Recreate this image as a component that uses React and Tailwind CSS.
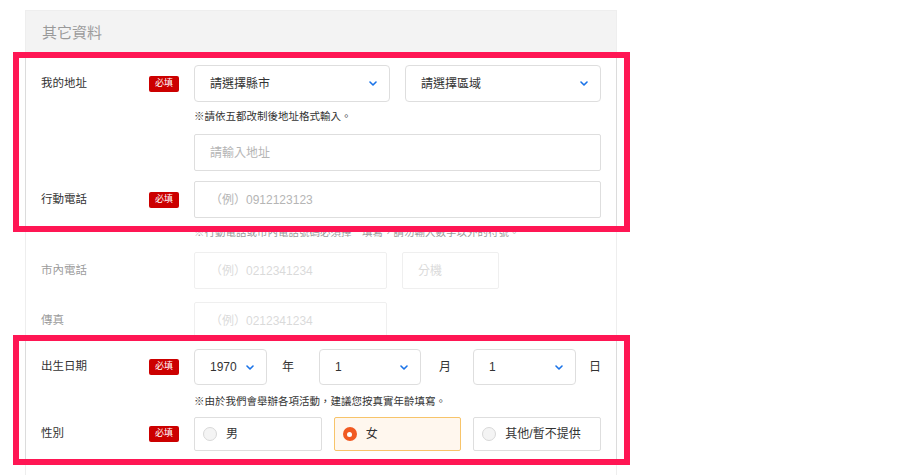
import React from "react";

const FONT = { fontFamily: '"Liberation Sans", "Noto Sans CJK TC", sans-serif' };

function Chevron() {
  return (
    <svg width="8" height="5" viewBox="0 0 8 5" fill="none">
      <path d="M1 1L4 4L7 1" stroke="#1a73e8" strokeWidth="1.6" strokeLinecap="round" strokeLinejoin="round" />
    </svg>
  );
}

function Select({ text, className }) {
  return (
    <div className={"flex items-center justify-between border border-[#dedede] rounded-[4px] bg-white pl-[15px] pr-[12px] text-[12px] text-[#333] " + className}>
      <span>{text}</span>
      <Chevron />
    </div>
  );
}

function Input({ ph, className }) {
  return (
    <div className={"flex items-center border border-[#dedede] rounded-[2px] bg-white pl-[15px] text-[12px] text-[#b5b5b5] " + className}>
      {ph}
    </div>
  );
}

function Badge() {
  return (
    <span className="flex h-[16px] w-[30px] items-center justify-center rounded-[2px] bg-[#cc0000] text-[9px] text-white">
      必填
    </span>
  );
}

function Label({ text, required, h = "h-[37px]" }) {
  return (
    <div className={"flex w-[153px] shrink-0 items-center justify-between pr-[15px] text-[11.5px] text-[#333] " + h}>
      <span>{text}</span>
      {required && <Badge />}
    </div>
  );
}

function Radio({ text, selected }) {
  return (
    <div
      className={
        "flex h-[34px] items-center rounded-[2px] border pl-[8px] text-[12px] text-[#333] " +
        (selected ? "border-[#f7c46a] bg-[#fff7ee]" : "border-[#dedede] bg-white")
      }
    >
      {selected ? (
        <span className="flex h-[14px] w-[14px] items-center justify-center rounded-full bg-[#f15a22]">
          <span className="h-[5px] w-[5px] rounded-full bg-white" />
        </span>
      ) : (
        <span className="h-[14px] w-[14px] rounded-full border border-[#d8d8d8] bg-[#f4f4f4]" />
      )}
      <span className="ml-[9px]">{text}</span>
    </div>
  );
}

export default function App() {
  return (
    <div className="relative h-[475px] w-[910px] overflow-hidden bg-white" style={FONT}>
      <div className="ml-[25px] mt-[10px] w-[592px] border border-[#dcdcdc] bg-white pb-[40px]">
        <div className="flex h-[45px] items-center bg-[#e6e6e6] pl-[16px] text-[15px] text-[#333]">其它資料</div>
        <div className="px-[15px] pt-[9px]">
          {/* address */}
          <div className="flex">
            <Label text="我的地址" required />
            <div className="flex-1">
              <div className="flex gap-[15px]">
                <Select text="請選擇縣市" className="h-[37px] w-[196px]" />
                <Select text="請選擇區域" className="h-[37px] w-[196px]" />
              </div>
              <div className="mt-[6px] text-[10.5px] leading-[16px] text-[#333]">※請依五都改制後地址格式輸入。</div>
              <Input ph="請輸入地址" className="mt-[10px] h-[37px]" />
            </div>
          </div>
          {/* mobile */}
          <div className="mt-[10px] flex">
            <Label text="行動電話" required />
            <div className="flex-1">
              <Input ph="（例）0912123123" className="h-[37px]" />
              <div className="mt-[6px] text-[10.5px] leading-[16px] text-[#333]">
                ※行動電話或市內電話號碼必須擇一填寫，請勿輸入數字以外的符號。
              </div>
            </div>
          </div>
          {/* local phone */}
          <div className="mt-[12px] flex">
            <Label text="市內電話" />
            <div className="flex flex-1">
              <Input ph="（例）0212341234" className="h-[37px] w-[193px]" />
              <Input ph="分機" className="ml-[15px] h-[37px] w-[97px]" />
            </div>
          </div>
          {/* fax */}
          <div className="mt-[13px] flex">
            <Label text="傳真" />
            <div className="flex flex-1">
              <Input ph="（例）0212341234" className="h-[37px] w-[193px]" />
            </div>
          </div>
          {/* birthday */}
          <div className="mt-[10px] flex">
            <Label text="出生日期" required h="h-[36px]" />
            <div className="flex-1">
              <div className="flex items-center text-[12px] text-[#333]">
                <Select text="1970" className="h-[36px] w-[73px]" />
                <span className="w-[52px] pl-[15px]">年</span>
                <Select text="1" className="h-[36px] w-[102px]" />
                <span className="w-[52px] pl-[18px]">月</span>
                <Select text="1" className="h-[36px] w-[103px]" />
                <span className="ml-auto">日</span>
              </div>
              <div className="mt-[8px] text-[10.5px] leading-[16px] text-[#333]">
                ※由於我們會舉辦各項活動，建議您按真實年齡填寫。
              </div>
            </div>
          </div>
          {/* gender */}
          <div className="mt-[8px] flex">
            <Label text="性別" required h="h-[34px]" />
            <div className="grid flex-1 grid-cols-3 gap-[12px]">
              <Radio text="男" />
              <Radio text="女" selected />
              <Radio text="其他/暫不提供" />
            </div>
          </div>
        </div>
      </div>

      {/* dim overlays outside highlighted areas */}
      <div className="absolute left-0 right-0 top-0 h-[52px] bg-white/50" />
      <div className="absolute left-0 right-0 top-[232px] h-[103px] bg-white/50" />
      <div className="absolute bottom-0 left-0 right-0 top-[465px] bg-white/50" />

      {/* highlight frames */}
      <div className="absolute left-[13px] top-[52px] h-[180px] w-[617px] border-[6px] border-[#ff1654]" />
      <div className="absolute left-[13px] top-[335px] h-[130px] w-[617px] border-[6px] border-[#ff1654]" />
    </div>
  );
}
